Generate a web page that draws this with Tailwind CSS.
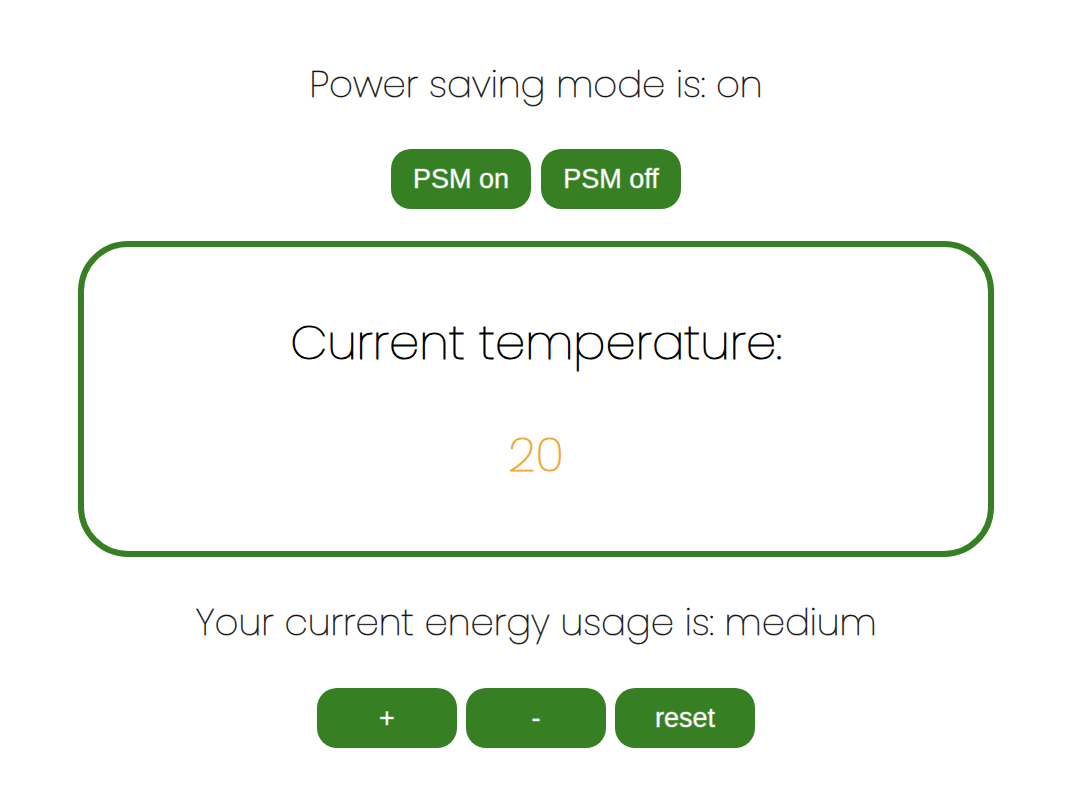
<!DOCTYPE html>
<html lang="en">
<head>
<meta charset="utf-8">
<meta name="viewport" content="width=device-width, initial-scale=1">
<title>Thermostat</title>
<script src="https://cdn.jsdelivr.net/npm/@tailwindcss/browser@4"></script>
</head>
<body class="bg-white font-['Poppins','Inter',sans-serif] font-extralight text-black text-center pr-[14px]">
<main class="flex flex-col items-center px-[78px] pt-14">
  <p class="text-[37px] leading-14 [-webkit-text-stroke:1px_#0009]">Power saving mode is: on</p>
  <div class="mt-[37px] flex gap-2.5">
    <button class="h-15 w-35 rounded-[20px] bg-[#367f22] font-['Liberation_Sans',sans-serif] text-[27px] font-normal text-white [-webkit-text-stroke:1px_#fff5]">PSM on</button>
    <button class="h-15 w-35 rounded-[20px] bg-[#367f22] font-['Liberation_Sans',sans-serif] text-[27px] font-normal text-white [-webkit-text-stroke:1px_#fff5]">PSM off</button>
  </div>
  <section class="mt-8 w-full rounded-[50px] border-6 border-[#367f22] pt-15 pb-15">
    <h1 class="text-[48px] leading-[72px] [-webkit-text-stroke:1px_#000]">Current temperature:</h1>
    <p class="mt-10 text-[48px] leading-[72px] text-[#f0a73a] [-webkit-text-stroke:1px_#f0a73a]">20</p>
  </section>
  <p class="mt-[37px] text-[37px] leading-14 [-webkit-text-stroke:1px_#0009]">Your current energy usage is: medium</p>
  <div class="mt-[38px] flex gap-[9px]">
    <button class="h-15 w-35 rounded-[20px] bg-[#367f22] font-['Liberation_Sans',sans-serif] text-[27px] font-normal text-white [-webkit-text-stroke:1px_#fff5]">+</button>
    <button class="h-15 w-35 rounded-[20px] bg-[#367f22] font-['Liberation_Sans',sans-serif] text-[27px] font-normal text-white [-webkit-text-stroke:1px_#fff5]">-</button>
    <button class="h-15 w-35 rounded-[20px] bg-[#367f22] font-['Liberation_Sans',sans-serif] text-[27px] font-normal text-white [-webkit-text-stroke:1px_#fff5]">reset</button>
  </div>
</main>
</body>
</html>
